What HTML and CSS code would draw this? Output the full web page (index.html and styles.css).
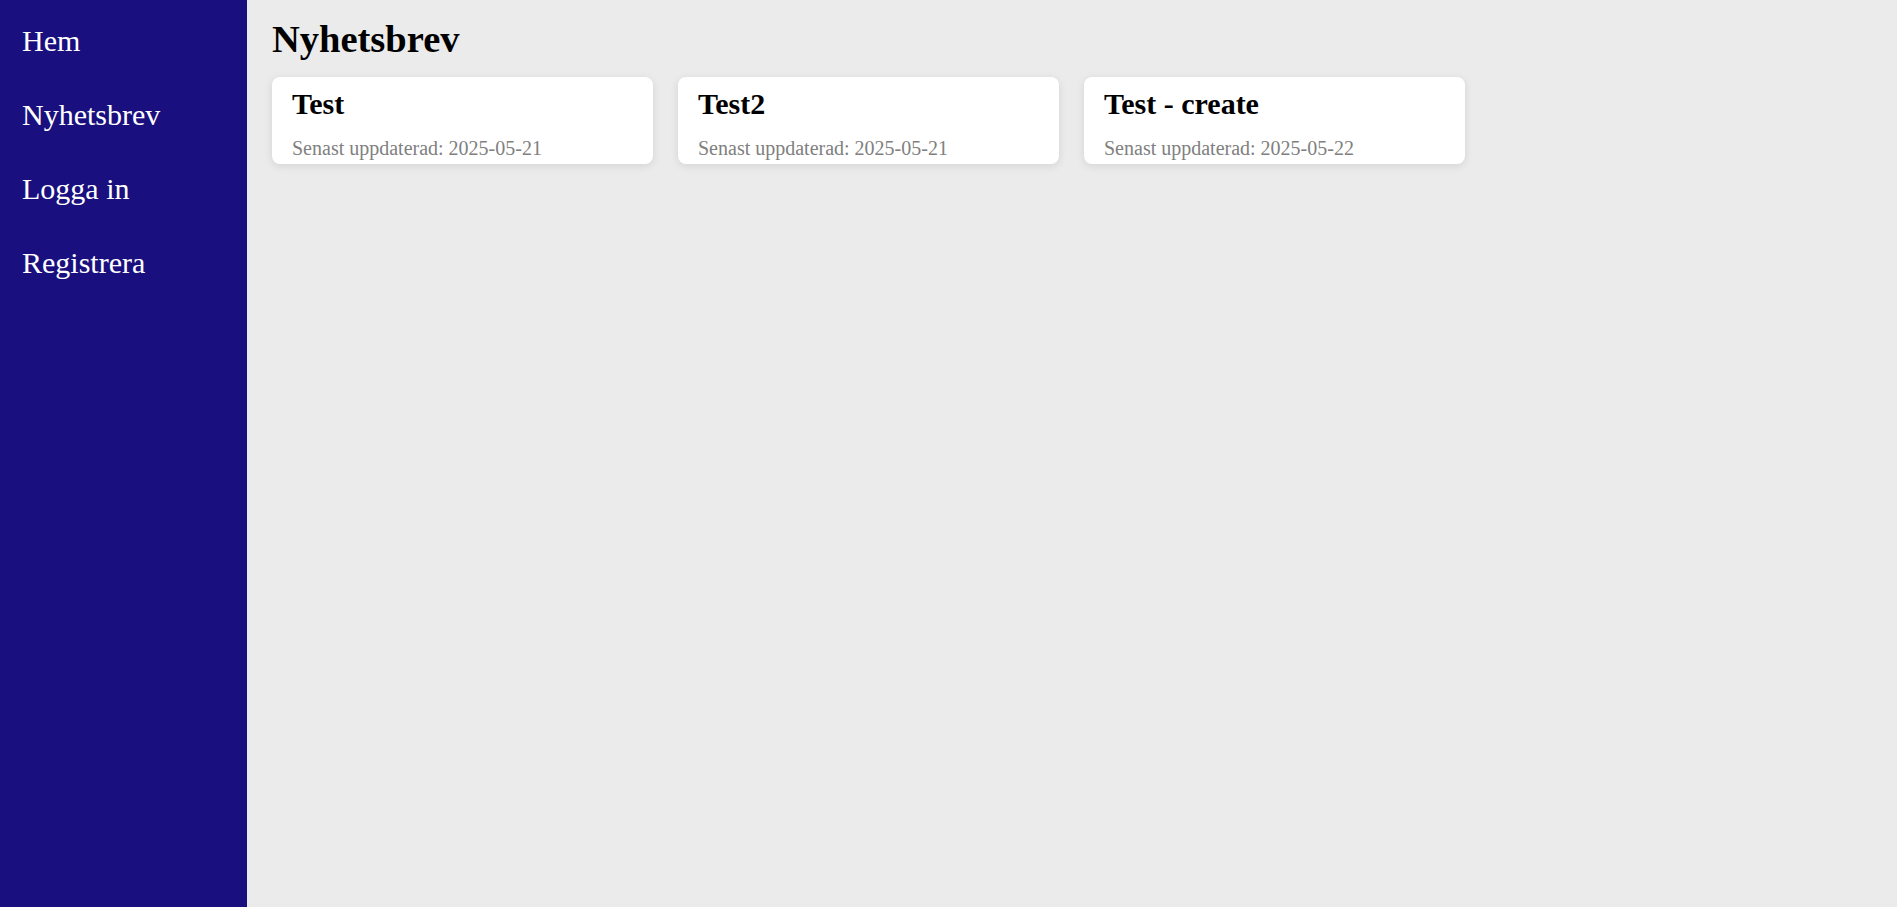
FILE: index.html
```html
<!DOCTYPE html>
<html lang="sv">
<head>
<meta charset="utf-8">
<title>Nyhetsbrev</title>
<link rel="stylesheet" href="styles.css">
</head>
<body>
<div class="layout">
  <nav class="sidebar">
    <a class="nav-link" href="#">Hem</a>
    <a class="nav-link" href="#">Nyhetsbrev</a>
    <a class="nav-link" href="#">Logga in</a>
    <a class="nav-link" href="#">Registrera</a>
  </nav>
  <main class="main">
    <h1 class="page-title">Nyhetsbrev</h1>
    <div class="cards">
      <div class="card">
        <h2 class="card-title">Test</h2>
        <p class="card-date">Senast uppdaterad: 2025-05-21</p>
      </div>
      <div class="card">
        <h2 class="card-title">Test2</h2>
        <p class="card-date">Senast uppdaterad: 2025-05-21</p>
      </div>
      <div class="card">
        <h2 class="card-title">Test - create</h2>
        <p class="card-date">Senast uppdaterad: 2025-05-22</p>
      </div>
    </div>
  </main>
</div>
</body>
</html>
```
FILE: styles.css
```css
html, body {
  margin: 0;
  padding: 0;
  height: 100%;
}
body {
  font-family: "Liberation Serif", "Times New Roman", serif;
  background: #ebebeb;
  color: #000;
}
.layout {
  display: flex;
  min-height: 100vh;
}
.sidebar {
  width: 247px;
  flex-shrink: 0;
  background: #1a0f7e;
  display: flex;
  flex-direction: column;
  gap: 40px;
  padding: 24px 0 0 22px;
  box-sizing: border-box;
}
.nav-link {
  color: #fff;
  text-decoration: none;
  font-size: 30px;
  line-height: 34px;
}
.main {
  flex: 1;
  padding: 17px 25px 0 25px;
}
.page-title {
  margin: 0;
  font-size: 38.5px;
  line-height: 44px;
  font-weight: bold;
}
.cards {
  display: flex;
  gap: 25px;
  margin-top: 16px;
}
.card {
  width: 381px;
  box-sizing: border-box;
  background: #fff;
  border-radius: 8px;
  box-shadow: 0 2px 8px rgba(0, 0, 0, 0.1);
  padding: 10px 20px 4px 20px;
  display: flex;
  flex-direction: column;
  gap: 15px;
}
.card-title {
  margin: 0;
  font-size: 30px;
  line-height: 34px;
  font-weight: bold;
}
.card-date {
  margin: 0;
  font-size: 20px;
  line-height: 24px;
  color: #808080;
}
```
